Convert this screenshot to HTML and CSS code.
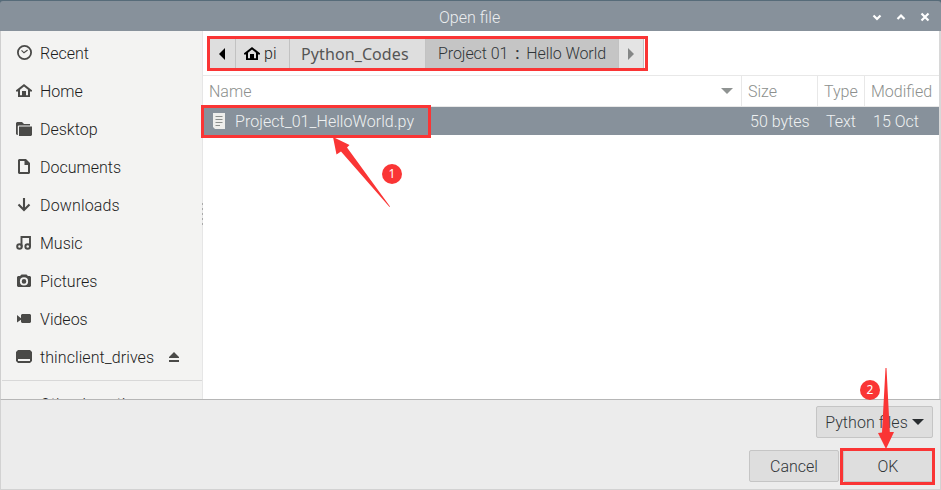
FILE: index.html
```
<!DOCTYPE html>
<html lang="en">
<head>
<meta charset="utf-8">
<title>Open file</title>
<link rel="stylesheet" href="styles.css">
</head>
<body>
<div class="window">
  <header class="titlebar">
    <span class="title">Open file</span>
    <div class="controls">
      <svg width="10" height="10" viewBox="0 0 10 10"><path d="M1.500 3.500 5 7 8.500 3.500"/></svg>
      <svg width="10" height="10" viewBox="0 0 10 10"><path d="M1.500 7 5 3.500 8.500 7"/></svg>
      <svg width="10" height="10" viewBox="0 0 10 10"><path d="M1.500 1.500 8.500 8.500M8.500 1.500 1.500 8.500"/></svg>
    </div>
  </header>
  <div class="body">
    <nav class="sidebar">
      <div class="place"><svg viewBox="0 0 16 16"><circle cx="8.500" cy="7.500" r="6.600" fill="none" stroke="#4a4a48" stroke-width="1.800"/><path d="M5.500 5.300 8 7.800 11.600 5" fill="none" stroke="#4a4a48" stroke-width="1.200"/></svg><span>Recent</span></div>
      <div class="place"><svg viewBox="0 0 16 16"><path fill-rule="evenodd" d="M8 1 0 7.300V8.600H2V14H14V8.600H16V7.300ZM8 3.500 12 6.800V12.200H10V8H6V12.200H4V6.800Z"/></svg><span>Home</span></div>
      <div class="place"><svg viewBox="0 0 16 16"><path d="M0 2 1 1H6L8 3H14V4.500H2.500L1.800 5.200V14H1L0 13ZM3 5.500H16V14L15 15H3Z"/></svg><span>Desktop</span></div>
      <div class="place"><svg viewBox="0 0 16 16"><path fill-rule="evenodd" d="M2 1 3 0H10L14 4V14L13 15H3L2 14ZM4 2V13H12V6H8.500V2Z"/></svg><span>Documents</span></div>
      <div class="place"><svg viewBox="0 0 16 16"><path d="M8 1V13M2.500 7.500 8 13 13.500 7.500" fill="none" stroke="#4a4a48" stroke-width="2.100"/></svg><span class="wide">Downloads</span></div>
      <div class="place"><svg viewBox="0 0 16 16"><path d="M5.500 11.500V2H14V11.500" fill="none" stroke="#4a4a48" stroke-width="1.900"/><g fill="none" stroke="#4a4a48" stroke-width="2"><circle cx="3.500" cy="11.500" r="2.300"/><circle cx="11.700" cy="11.500" r="2.300"/></g></svg><span>Music</span></div>
      <div class="place"><svg viewBox="0 0 16 16"><path fill-rule="evenodd" d="M1 4 2 3H4L5.500 1.500H10.500L12 3H14L15 4V13L14 14H2L1 13ZM8 4.300A4.100 4.100 0 1 0 8 12.500A4.100 4.100 0 1 0 8 4.300ZM8 6.100A2.300 2.300 0 1 1 8 10.700A2.300 2.300 0 1 1 8 6.100Z"/></svg><span>Pictures</span></div>
      <div class="place"><svg viewBox="0 0 16 16"><path d="M1 4 5 7.300V4L6 3H14L15 4V11L14 12H6L5 11V8.700L1 11.500Z"/></svg><span>Videos</span></div>
      <div class="place"><svg viewBox="0 0 16 16"><path fill-rule="evenodd" d="M0 3 2 1H14L16 3V12L14 14H2L0 12ZM2 10V12H14V10Z"/></svg><span class="drive">thinclient_drives</span><svg class="eject" viewBox="0 0 12 12"><path d="M6 1 11 6V7H1V6ZM1 9H11V11H1Z"/></svg></div>
      <div class="other">Other Locations</div>
    </nav>
    <div class="handle"></div>
    <main class="files">
      <div class="pathrow">
        <div class="pathbar">
          <div class="crumb back"><svg width="6" height="12" viewBox="0 0 6 12"><path d="M6 0V12L0 6Z"/></svg></div>
          <div class="crumb home"><svg width="16" height="16" viewBox="0 0 16 16"><path fill-rule="evenodd" d="M8 1 0 7.300V8.600H2V14H14V8.600H16V7.300ZM8 3.500 12 6.800V12.200H10V8H6V12.200H4V6.800Z"/></svg><span>pi</span></div>
          <div class="crumb codes">Python_Codes</div>
          <div class="crumb current">Project 01<span class="colon">:</span>Hello World</div>
          <div class="crumb next"><svg width="6" height="12" viewBox="0 0 6 12"><path d="M0 0V12L6 6Z" fill="#858787"/></svg></div>
        </div>
      </div>
      <div class="grid head">
        <div class="name">Name<svg width="12" height="6" viewBox="0 0 12 6"><path d="M0 0H12L6 6Z" fill="#8f9392"/></svg></div>
        <div>Size</div><div>Type</div><div>Modified</div>
      </div>
      <div class="grid row">
        <div class="file"><svg width="12" height="16" viewBox="0 0 12 16"><path d="M0 0H12V16H2L0 14Z" fill="#eeeeec"/><path d="M2.500 3.500H9.500M2.500 6.500H9.500M2.500 9.500H9.500M2.500 12.500H7" stroke="#8b8e8c"/></svg><span>Project_01_HelloWorld.py</span></div>
        <div>50 bytes</div><div>Text</div><div>15 Oct</div>
      </div>
    </main>
  </div>
  <footer class="footer">
    <div class="button filter">Python files<svg width="12" height="6" viewBox="0 0 12 6"><path d="M0 0H12L6 6Z" fill="#292d30"/></svg></div>
    <div class="actions"><div class="button cancel">Cancel</div><div class="button ok">OK</div></div>
  </footer>
</div>
<div class="outline outline-path"></div>
<div class="outline outline-file"></div>
<div class="outline outline-ok"></div>
<svg class="arrows" width="941" height="490" viewBox="0 0 941 490"><path d="M333 137 349.500 145 347 147.500 390 206.500 389.500 207 341 151.500 336.500 154.500Z"/><path d="M885.500 368H886.500L889.800 432H894L886 449 878 433 882 432.500Z"/></svg>
<span class="badge one">1</span>
<span class="badge two">2</span>
</body>
</html>
```
FILE: styles.css
```
* { box-sizing: border-box; }
body { margin: 0; width: 941px; height: 490px; overflow: hidden; background: #566b79; font: 300 16px/20px Roboto, "Liberation Sans", sans-serif; color: #1c1c1c; }
svg { flex: none; display: block; }
.window { height: 490px; display: flex; flex-direction: column; padding-top: 1px; }
.titlebar { height: 30px; flex: none; background: #87919b; border-radius: 3px 3px 0 0; display: flex; align-items: center; justify-content: center; color: #eceef0; padding: 2px 11px 0 0; }
.title { flex: 1; padding: 2px 0 0 439px; }
.controls { display: flex; gap: 14px; }
.controls path { fill: none; stroke: #fff; stroke-width: 2.2; }
.body { height: 368px; flex: none; display: flex; position: relative; border-left: 1px solid #cfcfcf; border-right: 2px solid #d8d8d8; background: #fff; }
.sidebar { width: 202px; flex: none; overflow: hidden; background: #f3f3f2; border-right: 1px solid #e6e6e6; padding-top: 3px; }
.place { height: 38px; display: flex; align-items: center; padding-left: 15px; gap: 8px; }
.place span { padding-top: 2px; }
.place .wide { letter-spacing: .15px; }
.place .drive { letter-spacing: .08px; }
.place svg { width: 16px; height: 16px; fill: #4a4a48; }
.place .eject { width: 12px; height: 12px; margin-left: 6px; }
.other { margin-left: 1px; border-top: 1px solid #d8d8d8; padding: 14px 0 0 38px; margin-top: 4px; }
.handle { position: absolute; left: 201px; top: 172px; width: 1px; height: 24px; background: repeating-linear-gradient(#aaa 0 2px, transparent 2px 5px); }
.files { flex: 1; min-width: 0; }
.pathrow { height: 44px; padding: 8px 0 0 7px; }
.pathbar { display: flex; width: 434px; height: 29px; background: #dedede; }
.crumb { display: flex; align-items: center; border-right: 1px solid #c2c2c2; color: #303538; white-space: nowrap; }
.back { width: 26px; padding-left: 9px; }
.home { width: 54px; padding-left: 8px; gap: 4px; color: #222; }
.codes { width: 136px; padding-left: 11px; font: 400 16px/20px "Noto Sans", sans-serif; color: #555; letter-spacing: .1px; }
.current { width: 193px; padding-left: 12px; background: #c5c5c5; letter-spacing: -.08px; }
.colon { width: 18px; text-align: center; font-weight: 500; }
.next { width: 25px; padding-left: 9px; background: #e4e4e4; }
.grid { display: grid; grid-template-columns: 539px 76px 47px 1fr; }
.grid > div { display: flex; align-items: center; white-space: nowrap; }
.head { height: 32px; border: solid #e8e8e8; border-width: 1px 0; color: #8c8f8d; }
.head > div { padding-left: 6px; padding-top: 2px; border-right: 1px solid #e8e8e8; }
.head > div:last-child { border-right: 0; }
.head .name { justify-content: space-between; padding-right: 8px; }
.head svg { margin-top: -2px; }
.row { height: 28px; background: #87919b; color: #eff1f2; }
.row > div { padding-left: 8px; padding-top: 2px; }
.row .file { padding-left: 10px; gap: 10px; letter-spacing: .05px; }
.row svg { margin-top: -2px; }
.footer { flex: 1; background: #ececec; border: solid #d2d2d2; border-width: 1px 1px 1px; border-top-color: #b6b6b6; padding: 6px 7px 0 0; display: flex; flex-direction: column; align-items: flex-end; gap: 12px; }
.button { height: 32px; border: 1px solid #c5c5c5; border-radius: 2px; background: #dedede; display: flex; align-items: center; justify-content: center; color: #303538; padding-top: 2px; }
.filter { width: 117px; gap: 4px; letter-spacing: .05px; }
.filter svg { margin-top: -2px; }
.actions { display: flex; gap: 4px; }
.cancel, .ok { width: 90px; }
.outline { position: absolute; border: 3px solid #fa3535; }
.outline-path { left: 207px; top: 36px; width: 441px; height: 35px; }
.outline-file { left: 201px; top: 105px; width: 230px; height: 33px; }
.outline-ok { left: 840px; top: 448px; width: 95px; height: 37px; }
.arrows { position: absolute; left: 0; top: 0; fill: #fa3535; }
.badge { position: absolute; width: 20px; height: 20px; border-radius: 50%; background: #fa3535; color: #fff; text-align: center; font: 400 12px/20px "Noto Sans", sans-serif; }
.one { left: 382px; top: 164px; }
.two { left: 860px; top: 380px; }
```
